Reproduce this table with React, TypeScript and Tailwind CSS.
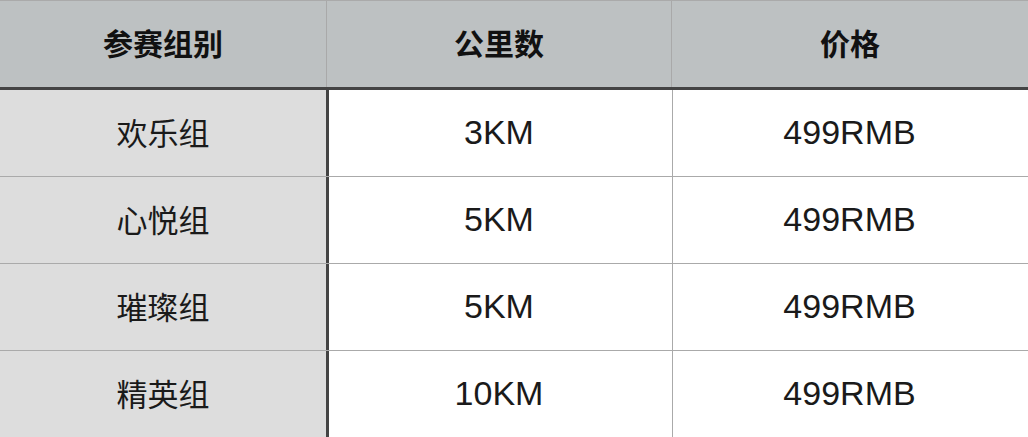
const rows = [
  { group: "欢乐组", km: "3KM", price: "499RMB" },
  { group: "心悦组", km: "5KM", price: "499RMB" },
  { group: "璀璨组", km: "5KM", price: "499RMB" },
  { group: "精英组", km: "10KM", price: "499RMB" },
];

const cjk = "font-['Noto_Sans_CJK_SC','Noto_Sans_CJK_JP',sans-serif]";
const latin = "font-['Liberation_Sans',Arial,sans-serif]";

export default function App() {
  return (
    <div className="w-[1028px] h-[437px] overflow-hidden bg-white text-[#111]">
      {/* header */}
      <div className="grid grid-cols-[327px_345px_1fr] h-[90px] border-t border-[#aaaaaa] border-b-[3px] border-b-[#444444] bg-[#bdc1c2]">
        <div className={`flex items-center justify-center pb-[4px] border-r border-[#a9a9a9] text-[30px] font-bold leading-none ${cjk}`}>
          参赛组别
        </div>
        <div className={`flex items-center justify-center pb-[4px] border-r border-[#a9a9a9] text-[30px] font-bold leading-none ${cjk}`}>
          公里数
        </div>
        <div className={`flex items-center justify-center pb-[4px] text-[30px] font-bold leading-none ${cjk}`}>
          价格
        </div>
      </div>
      {/* body */}
      {rows.map((r, i) => (
        <div
          key={i}
          className="grid grid-cols-[329px_344px_1fr] h-[87px] border-b border-[#aaaaaa]"
        >
          <div className={`flex items-center justify-center pb-[3px] bg-[#dddddd] border-r-[3px] border-[#444444] text-[31px] leading-none text-[#1a1a1a] ${cjk}`}>
            {r.group}
          </div>
          <div className={`flex items-center justify-center pb-[2px] pr-[3px] border-r border-[#aaaaaa] text-[34px] leading-none text-[#1a1a1a] ${latin}`}>
            {r.km}
          </div>
          <div className={`flex items-center justify-center pb-[2px] pr-[2px] text-[34px] leading-none text-[#1a1a1a] ${latin}`}>
            {r.price}
          </div>
        </div>
      ))}
    </div>
  );
}
